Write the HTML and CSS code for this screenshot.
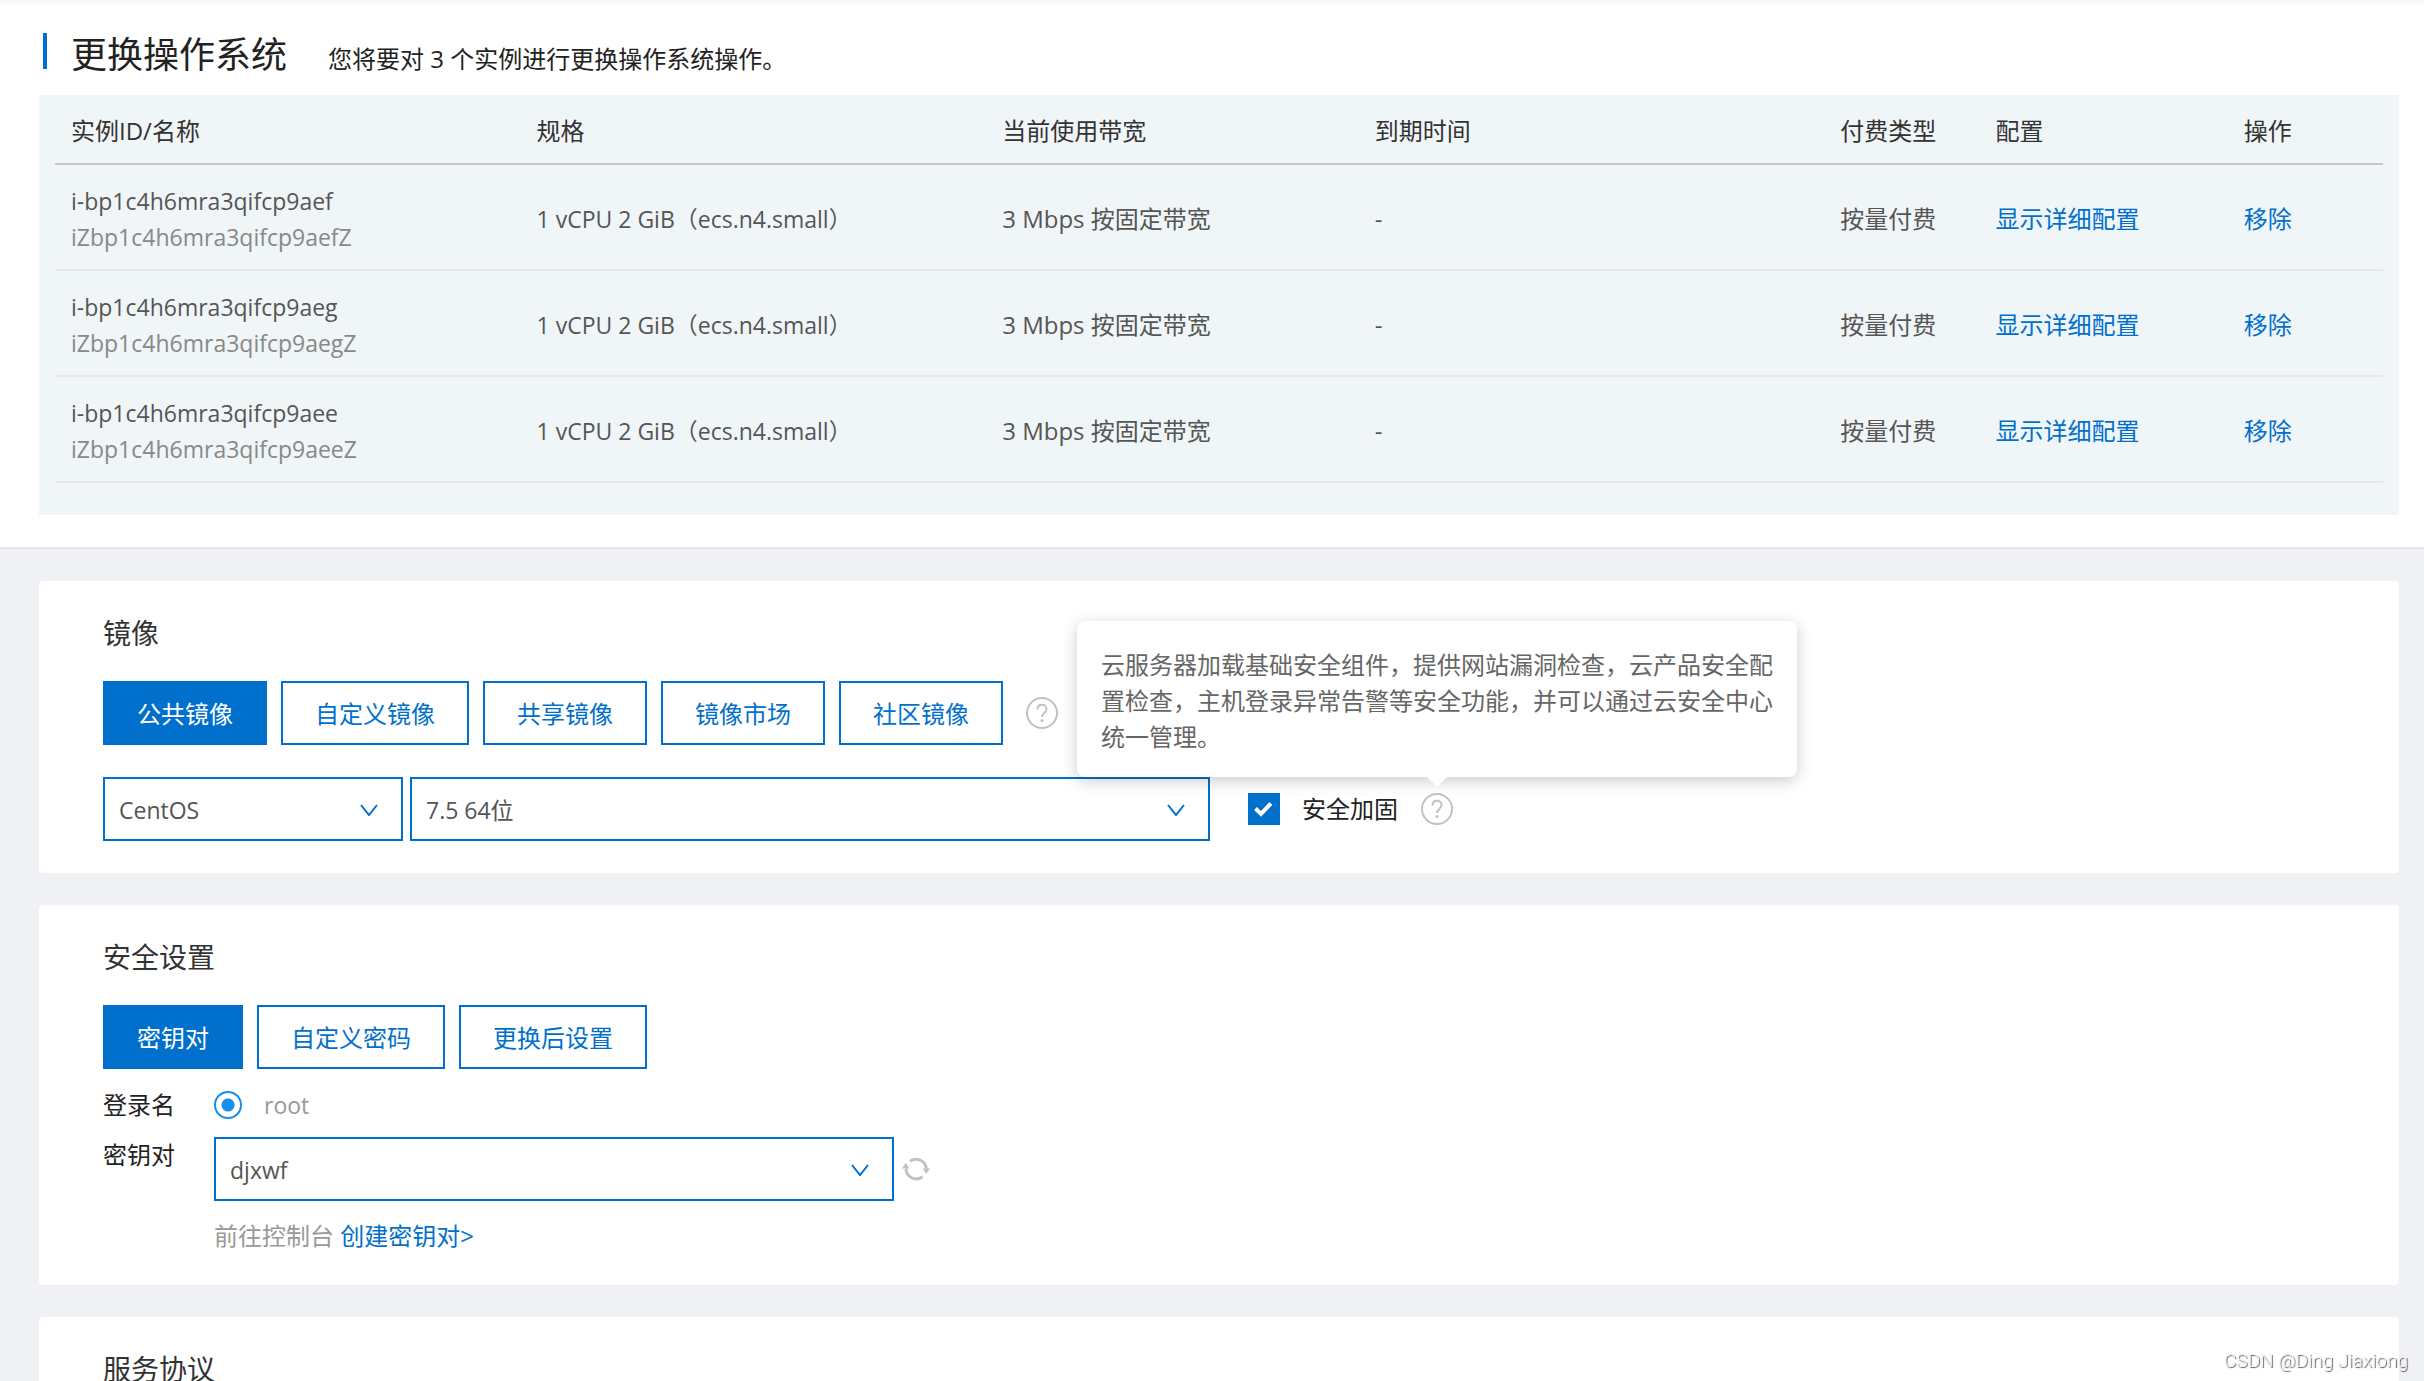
FILE: index.html
```html
<!DOCTYPE html>
<html lang="zh-CN">
<head>
<meta charset="utf-8">
<meta name="viewport" content="width=device-width, initial-scale=1">
<title>更换操作系统</title>
<link rel="stylesheet" href="styles.css">
</head>
<body>
<svg class="symbols" aria-hidden="true">
  <symbol id="icon-chevron" viewBox="0 0 18 12"><path d="M1 1l8 10 8-10" fill="none" stroke="currentColor" stroke-width="2"/></symbol>
  <symbol id="icon-help" viewBox="0 0 32 32">
    <circle cx="16" cy="16" r="15" fill="none" stroke="currentColor" stroke-width="2"/>
    <path d="M11.5 12.5c0-3 2-4.700 4.500-4.700s4.500 1.700 4.500 4.300c0 3.800-4.500 4-4.500 8" fill="none" stroke="currentColor" stroke-width="2"/>
    <circle cx="16" cy="23.500" r="1.500" fill="currentColor"/>
  </symbol>
</svg>

<header class="overview">
  <div class="heading">
    <div class="heading-text">
      <h1 class="heading-title">更换操作系统</h1>
      <p class="heading-note">您将要对 3 个实例进行更换操作系统操作。</p>
    </div>
  </div>
  <div class="instances">
    <table class="table">
      <colgroup>
        <col class="col-wide"><col class="col-wide"><col class="col-bandwidth"><col class="col-wide"><col class="col-narrow"><col class="col-config"><col class="col-narrow">
      </colgroup>
      <thead>
        <tr><th>实例ID/名称</th><th>规格</th><th>当前使用带宽</th><th>到期时间</th><th>付费类型</th><th>配置</th><th>操作</th></tr>
      </thead>
      <tbody>
        <tr>
          <td class="latin"><div>i-bp1c4h6mra3qifcp9aef</div><div class="instance-name">iZbp1c4h6mra3qifcp9aefZ</div></td>
          <td class="latin">1 vCPU 2 GiB（ecs.n4.small）</td><td>3 Mbps 按固定带宽</td><td>-</td><td>按量付费</td>
          <td><a class="link" href="#">显示详细配置</a></td><td><a class="link" href="#">移除</a></td>
        </tr>
        <tr>
          <td class="latin"><div>i-bp1c4h6mra3qifcp9aeg</div><div class="instance-name">iZbp1c4h6mra3qifcp9aegZ</div></td>
          <td class="latin">1 vCPU 2 GiB（ecs.n4.small）</td><td>3 Mbps 按固定带宽</td><td>-</td><td>按量付费</td>
          <td><a class="link" href="#">显示详细配置</a></td><td><a class="link" href="#">移除</a></td>
        </tr>
        <tr>
          <td class="latin"><div>i-bp1c4h6mra3qifcp9aee</div><div class="instance-name">iZbp1c4h6mra3qifcp9aeeZ</div></td>
          <td class="latin">1 vCPU 2 GiB（ecs.n4.small）</td><td>3 Mbps 按固定带宽</td><td>-</td><td>按量付费</td>
          <td><a class="link" href="#">显示详细配置</a></td><td><a class="link" href="#">移除</a></td>
        </tr>
      </tbody>
    </table>
  </div>
</header>

<main class="sections">
  <section class="card">
    <h2 class="card-title">镜像</h2>
    <div class="tabs">
      <button class="tab tab-active" type="button">公共镜像</button>
      <button class="tab" type="button">自定义镜像</button>
      <button class="tab" type="button">共享镜像</button>
      <button class="tab" type="button">镜像市场</button>
      <button class="tab" type="button">社区镜像</button>
      <button class="help" type="button" aria-label="镜像说明"><svg class="help-icon"><use href="#icon-help"/></svg></button>
    </div>
    <div class="image-row">
      <div class="select select-os latin">
        <select class="select-box" aria-label="操作系统"><option>CentOS</option></select>
        <svg class="select-arrow"><use href="#icon-chevron"/></svg>
      </div>
      <div class="select select-version latin">
        <select class="select-box" aria-label="版本"><option>7.5 64位</option></select>
        <svg class="select-arrow"><use href="#icon-chevron"/></svg>
      </div>
      <div class="harden">
        <label class="check"><input class="check-box" type="checkbox" checked>安全加固</label>
        <div class="help-anchor">
          <button class="help" type="button" aria-label="安全加固说明" aria-describedby="harden-tip"><svg class="help-icon"><use href="#icon-help"/></svg></button>
          <div class="tooltip" id="harden-tip" role="tooltip">云服务器加载基础安全组件，提供网站漏洞检查，云产品安全配置检查，主机登录异常告警等安全功能，并可以通过云安全中心统一管理。</div>
        </div>
      </div>
    </div>
  </section>

  <section class="card">
    <h2 class="card-title">安全设置</h2>
    <div class="tabs">
      <button class="tab tab-active" type="button">密钥对</button>
      <button class="tab" type="button">自定义密码</button>
      <button class="tab" type="button">更换后设置</button>
    </div>
    <div class="form">
      <span class="form-label">登录名</span>
      <label class="radio latin"><input class="radio-dot" type="radio" name="login" checked>root</label>
      <label class="form-label" for="keypair">密钥对</label>
      <div class="form-field">
        <div class="select select-key latin">
          <select class="select-box" id="keypair"><option>djxwf</option></select>
          <svg class="select-arrow"><use href="#icon-chevron"/></svg>
        </div>
        <button class="refresh" type="button" aria-label="刷新">
          <svg class="refresh-icon" viewBox="0 0 28 28">
            <path d="M8 6.200a10.300 10.300 0 0 1 16.300 7.800M20.500 21.800A10.300 10.300 0 0 1 4 13.500" fill="none" stroke="currentColor" stroke-width="3"/>
            <path d="M20.500 13.500h7.500l-3.700 5.500zM0 13.500h7.500l-3.700-5.500z" fill="currentColor"/>
          </svg>
        </button>
      </div>
      <p class="form-hint">前往控制台 <a class="link" href="#">创建密钥对&gt;</a></p>
    </div>
  </section>

  <section class="card">
    <h2 class="card-title">服务协议</h2>
  </section>
</main>
<div class="watermark">CSDN @Ding Jiaxiong</div>
</body>
</html>
```
FILE: styles.css
```css
:root {
  --blue: #0070cc;
  --grey-icon: #c1c1c1;
}

* {
  box-sizing: border-box;
}

html {
  height: 100%;
  overflow: hidden;
}

body {
  margin: 0;
  height: 100%;
  overflow: hidden;
  background: #f0f1f5;
  color: #222;
  font: 24px/36px "Open Sans", "Noto Sans CJK SC", sans-serif;
}

h1,
h2,
p {
  margin: 0;
  font-weight: 400;
}

button,
select {
  font: inherit;
}

.symbols {
  display: none;
}

.link {
  color: var(--blue);
  text-decoration: none;
}

/* Text that is mostly Latin is set one step smaller than Chinese text */
.latin {
  font-size: 23px;
}

/* Page heading and instance table */
.overview {
  padding: 33px 25px 32px 39px;
  border-bottom: 2px solid #e6e6e6;
  background: linear-gradient(#f4f4f4, #fff 6px);
}

.heading {
  display: flex;
  gap: 24px;
  height: 62px;
  padding-left: 4px;
}

.heading::before {
  content: "";
  width: 4px;
  height: 36px;
  background: var(--blue);
}

.heading-text {
  display: flex;
  align-items: baseline;
  gap: 41px;
  padding-top: 4px;
}

.heading-title {
  font-size: 36px;
  line-height: 36px;
}

.instances {
  padding: 0 16px 32px;
  background: #f0f5f8;
}

.table {
  width: 100%;
  table-layout: fixed;
  border-collapse: separate;
  border-spacing: 0;
  color: #555;
}

.col-wide {
  width: 20%;
}

.col-bandwidth {
  width: 16%;
}

.col-narrow {
  width: calc(100% / 15);
}

.table th,
.table td {
  padding: 3px 16px 0;
  text-align: left;
  font-weight: 400;
  white-space: nowrap;
}

.table th {
  height: 70px;
  border-bottom: 2px solid #c8c8c8;
  color: #333;
}

.table td {
  height: 106px;
  border-bottom: 2px solid #e6e8e8;
}

.instance-name {
  color: #888;
}

/* Setting cards */
.sections {
  display: flex;
  flex-direction: column;
  gap: 32px;
  padding: 32px 25px 32px 39px;
}

.card {
  padding: 32px 64px;
  border-radius: 4px;
  background: #fff;
}

.card-title {
  margin-bottom: 28px;
  color: #333;
  font-size: 28px;
  line-height: 40px;
}

.tabs {
  display: flex;
  align-items: center;
  gap: 14px;
}

.tab {
  height: 64px;
  padding: 2px 32px 0;
  border: 2px solid var(--blue);
  background: #fff;
  color: var(--blue);
}

.tab-active {
  background: var(--blue);
  color: #fff;
}

.help {
  display: block;
  width: 32px;
  height: 32px;
  padding: 0;
  border: 0;
  background: none;
  color: var(--grey-icon);
}

.tabs .help {
  margin-left: 9px;
}

.help-icon {
  display: block;
  width: 32px;
  height: 32px;
}

.image-row {
  display: flex;
  align-items: center;
  gap: 7px;
  margin-top: 32px;
}

.select {
  position: relative;
}

.select-os {
  width: 300px;
}

.select-version {
  width: 800px;
}

.select-key {
  width: 680px;
}

.select-box {
  display: block;
  width: 100%;
  height: 64px;
  padding: 2px 60px 0 14px;
  border: 2px solid var(--blue);
  border-radius: 0;
  background: #fff;
  color: #555;
  appearance: none;
}

.select-arrow {
  position: absolute;
  top: 27px;
  right: 25px;
  width: 18px;
  height: 12px;
  color: var(--blue);
  pointer-events: none;
}

.harden {
  display: flex;
  align-items: center;
  gap: 23px;
  margin-left: 31px;
}

.check {
  display: flex;
  align-items: center;
  gap: 22px;
}

.check-box {
  width: 32px;
  height: 32px;
  margin: 0;
  appearance: none;
  background: var(--blue);
}

.check-box:checked {
  background: var(--blue) url("data:image/svg+xml,%3Csvg xmlns='http://www.w3.org/2000/svg' viewBox='0 0 32 32'%3E%3Cpath d='M7.500 15.500l5.500 5.500 10-10.500' fill='none' stroke='%23fff' stroke-width='4'/%3E%3C/svg%3E");
}

.help-anchor {
  position: relative;
}

.tooltip {
  position: absolute;
  bottom: 48px;
  left: -344px;
  width: 720px;
  padding: 26px 24px 22px;
  border-radius: 8px;
  background: #fff;
  box-shadow: 0 4px 16px rgba(0, 0, 0, 0.2);
  color: #666;
}

.tooltip::after {
  content: "";
  position: absolute;
  top: 100%;
  left: 350px;
  border: 10px solid transparent;
  border-top-color: #fff;
  border-bottom: 0;
}

/* Login form */
.form {
  display: grid;
  grid-template-columns: 111px 1fr;
  margin-top: 18px;
}

.form-label {
  height: 50px;
}

.radio {
  display: flex;
  align-items: center;
  gap: 22px;
  height: 36px;
  color: #999;
}

.radio-dot {
  width: 28px;
  height: 28px;
  margin: 0;
  appearance: none;
  border: 2px solid #148fef;
  border-radius: 50%;
  background: radial-gradient(#148fef 6px, #fff 7px);
}

.form-field {
  display: flex;
  align-items: center;
  gap: 8px;
}

.refresh {
  width: 28px;
  height: 28px;
  padding: 0;
  border: 0;
  background: none;
  color: var(--grey-icon);
}

.refresh-icon {
  display: block;
  width: 28px;
  height: 28px;
}

.form-hint {
  grid-column: 2;
  padding-top: 17px;
  margin-bottom: -1px;
  color: #999;
}

.watermark {
  position: fixed;
  right: 16px;
  bottom: 4px;
  color: #f4f4f4;
  font: 300 19px/32px Roboto, "Noto Sans", sans-serif;
  text-shadow: 1px 1px 1px #555;
}
```
